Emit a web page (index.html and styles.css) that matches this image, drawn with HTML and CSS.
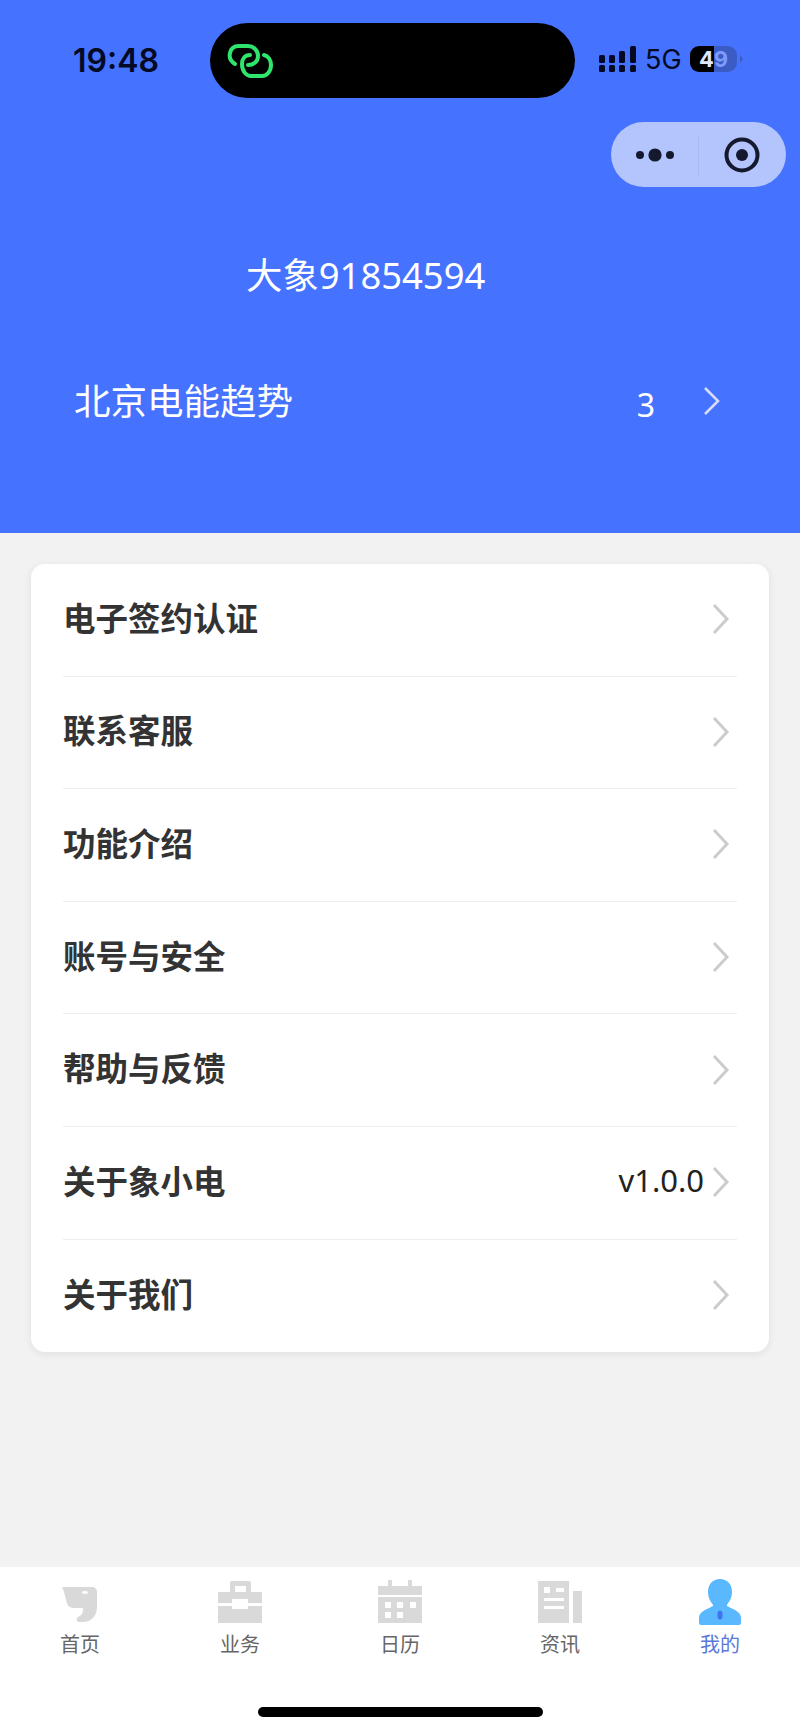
FILE: index.html
```html
<!DOCTYPE html>
<html lang="zh-CN">
<head>
    <meta charset="UTF-8">
    <meta name="viewport" content="width=device-width, initial-scale=1.0">
    <title>我的</title>
    <link rel="stylesheet" href="styles.css">
</head>
<body>
    <header class="header">
        <div class="status-bar">
            <span class="time">19:48</span>
            <div class="island">
                <svg class="link-icon" viewBox="0 0 46 36" fill="none" stroke="#2fe56b" stroke-width="4" stroke-linecap="round">
                    <path d="M8 21C3 18 2 14 3 10C4 5 8 3 12 3H21C27 3 31 8 31 13C31 19 26 22 21 22"/>
                    <path d="M23 12C18 12 15 16 15 21C15 28 19 33 24 33H35C40 33 44 28 44 22C44 17 41 13 37 12"/>
                </svg>
            </div>
            <svg class="signal" viewBox="0 0 37 26" fill="#050a24">
                <rect x="0" y="9" width="6" height="8" rx="1.5"/>
                <rect x="10" y="9" width="6" height="8" rx="1.5"/>
                <rect x="20" y="5" width="6" height="12" rx="1.5"/>
                <rect x="31" y="0" width="6" height="17" rx="1.5"/>
                <rect x="0" y="19" width="6" height="7" rx="1.5"/>
                <rect x="10" y="19" width="6" height="7" rx="1.5"/>
                <rect x="20" y="19" width="6" height="7" rx="1.5"/>
                <rect x="31" y="19" width="6" height="7" rx="1.5"/>
            </svg>
            <span class="network">5G</span>
            <div class="battery"><span class="battery-on">4</span><span class="battery-off">9</span></div>
            <span class="battery-tip"></span>
        </div>

        <div class="capsule">
            <div class="capsule-part">
                <svg width="42" height="16" viewBox="0 0 42 16" fill="#14192e">
                    <circle cx="6" cy="8" r="4"/>
                    <circle cx="21" cy="8" r="6.6"/>
                    <circle cx="36" cy="8" r="4"/>
                </svg>
            </div>
            <div class="capsule-part capsule-target">
                <svg width="36" height="36" viewBox="0 0 36 36">
                    <circle cx="18" cy="18" r="15.5" fill="none" stroke="#14192e" stroke-width="4"/>
                    <circle cx="18" cy="18" r="6" fill="#14192e"/>
                </svg>
            </div>
        </div>

        <div class="username">大象91854594</div>

        <div class="company">
            <span>北京电能趋势</span>
            <div class="company-right">
                <span class="company-count">3</span>
                <svg class="company-arrow" viewBox="0 0 18 30" fill="none" stroke="#d5dcf5" stroke-width="2.6">
                    <path d="M2 2L15 15L2 28"/>
                </svg>
            </div>
        </div>
    </header>

    <main class="main">
        <ul class="menu">
            <li class="menu-item">
                <span class="menu-title">电子签约认证</span>
                <svg class="arrow" viewBox="0 0 18 32" fill="none" stroke="#ccc" stroke-width="3"><path d="M2 2L15 16L2 30"/></svg>
            </li>
            <li class="menu-item">
                <span class="menu-title">联系客服</span>
                <svg class="arrow" viewBox="0 0 18 32" fill="none" stroke="#ccc" stroke-width="3"><path d="M2 2L15 16L2 30"/></svg>
            </li>
            <li class="menu-item">
                <span class="menu-title">功能介绍</span>
                <svg class="arrow" viewBox="0 0 18 32" fill="none" stroke="#ccc" stroke-width="3"><path d="M2 2L15 16L2 30"/></svg>
            </li>
            <li class="menu-item">
                <span class="menu-title">账号与安全</span>
                <svg class="arrow" viewBox="0 0 18 32" fill="none" stroke="#ccc" stroke-width="3"><path d="M2 2L15 16L2 30"/></svg>
            </li>
            <li class="menu-item">
                <span class="menu-title">帮助与反馈</span>
                <svg class="arrow" viewBox="0 0 18 32" fill="none" stroke="#ccc" stroke-width="3"><path d="M2 2L15 16L2 30"/></svg>
            </li>
            <li class="menu-item">
                <span class="menu-title">关于象小电</span>
                <span class="version">v1.0.0</span>
                <svg class="arrow" viewBox="0 0 18 32" fill="none" stroke="#ccc" stroke-width="3"><path d="M2 2L15 16L2 30"/></svg>
            </li>
            <li class="menu-item">
                <span class="menu-title">关于我们</span>
                <svg class="arrow" viewBox="0 0 18 32" fill="none" stroke="#ccc" stroke-width="3"><path d="M2 2L15 16L2 30"/></svg>
            </li>
        </ul>
    </main>

    <footer class="tabbar">
        <nav class="tabs">
            <div class="tab">
                <svg class="tab-icon" viewBox="6 6 48 48" fill="#d9d9d9">
                    <path d="M12 15H42C45 15 47 17 47 20V35C47 44 41 50 33 50H29C27 50 26 48 27 46C28 44 31 44 32 42C33 40 33 38 33 36H24C19 36 17 33 16 28C15 23 14 19 12 15Z"/>
                    <ellipse cx="35" cy="20.5" rx="3" ry="1.4" fill="#fff"/>
                </svg>
                <span class="tab-label">首页</span>
            </div>
            <div class="tab">
                <svg class="tab-icon" viewBox="6 6 48 48" fill="#d9d9d9">
                    <path fill-rule="evenodd" d="M22 9H39Q41 9 41 11V20H52V31H38V27H22V31H8V20H20V11Q20 9 22 9ZM25 14V20H36V14Z"/>
                    <path d="M8 34H22V37H38V34H52V51H8Z"/>
                </svg>
                <span class="tab-label">业务</span>
            </div>
            <div class="tab">
                <svg class="tab-icon" viewBox="6 6 48 48" fill="#d9d9d9">
                    <path d="M18 8H22V14H38V8H42V14H52V23H8V14H18Z"/>
                    <path fill-rule="evenodd" d="M8 25H52V51H8ZM15 30V36H21V30ZM27 30V36H33V30ZM40 30V36H46V30ZM15 40V46H21V40ZM27 40V46H33V40Z"/>
                </svg>
                <span class="tab-label">日历</span>
            </div>
            <div class="tab">
                <svg class="tab-icon" viewBox="6 6 48 48" fill="#d9d9d9">
                    <path fill-rule="evenodd" d="M8 9H39V51H8ZM14 15V21H20V15ZM26 16V20H34V16ZM14 26V29H34V26ZM14 34V37H34V34Z"/>
                    <rect x="43" y="19" width="9" height="32"/>
                </svg>
                <span class="tab-label">资讯</span>
            </div>
            <div class="tab tab-active">
                <svg class="tab-icon" viewBox="6 6 48 48">
                    <path fill="#5ab8ff" d="M30 7C37 7 42 12 42 20C42 26 39 30 37 33V34C42 37 51 39 51 46V51Q51 53 49 53H11Q9 53 9 51V46C9 39 18 37 23 34V33C21 30 18 26 18 20C18 12 23 7 30 7Z"/>
                    <ellipse cx="30" cy="43" rx="2.6" ry="4.6" fill="#3f73f0"/>
                </svg>
                <span class="tab-label">我的</span>
            </div>
        </nav>
        <div class="home-bar"></div>
    </footer>
</body>
</html>
```

FILE: styles.css
```css
/* page */
* {
    box-sizing: border-box;
}

body {
    margin: 0;
    height: 1734px;
    display: flex;
    flex-direction: column;
    background-color: #f2f2f2;
    font-family: "Noto Sans", "Noto Sans CJK SC", sans-serif;
    color: #333;
}

/* blue header */
.header {
    height: 533px;
    padding-top: 23px;
    display: flex;
    flex-direction: column;
    background-color: #4572ff;
    color: #fff;
}

.status-bar {
    height: 75px;
    padding-left: 73px;
    display: flex;
    align-items: center;
    color: #050a24;
}

.time {
    width: 137px;
    font-family: Inter, sans-serif;
    font-size: 32px;
    font-weight: 600;
}

.island {
    width: 365px;
    height: 75px;
    padding-left: 17px;
    display: flex;
    align-items: center;
    margin-right: 24px;
    border-radius: 38px;
    background-color: #000;
}

.link-icon {
    width: 46px;
    height: 36px;
}

.signal {
    width: 37px;
    height: 26px;
    margin-right: 9px;
    margin-bottom: 3px;
}

.network {
    width: 45px;
    margin-bottom: 2px;
    font-family: Inter, sans-serif;
    font-size: 27px;
}

.battery {
    width: 47px;
    height: 26px;
    margin-bottom: 3px;
    display: flex;
    align-items: center;
    justify-content: center;
    border-radius: 9px;
    background: linear-gradient(to right, #000 24px, #3a5cc4 24px);
    font-family: Inter, sans-serif;
    font-size: 22px;
    font-weight: 700;
}

.battery-on {
    color: #dfe6ff;
}

.battery-off {
    color: #7d9bff;
}

.battery-tip {
    margin-left: 3px;
    margin-bottom: 3px;
    border-left: 3px solid #3a5cc4;
    border-top: 4px solid transparent;
    border-bottom: 4px solid transparent;
}

.capsule {
    align-self: flex-end;
    width: 175px;
    height: 65px;
    margin-top: 24px;
    margin-right: 14px;
    display: flex;
    align-items: center;
    border-radius: 33px;
    background-color: #b3c5fc;
}

.capsule-part {
    width: 87px;
    height: 40px;
    display: flex;
    align-items: center;
    justify-content: center;
}

.capsule-target {
    width: 86px;
    border-left: 1px solid #a6b9f2;
}

.username {
    margin-top: 63px;
    margin-left: 246px;
    font-size: 36.4px;
    line-height: 50px;
}

.company {
    margin-top: 76px;
    padding: 0 79px 0 74px;
    display: flex;
    align-items: center;
    justify-content: space-between;
    font-size: 36.5px;
    line-height: 50px;
}

.company-right {
    display: flex;
    align-items: center;
    gap: 48px;
}

.company-count {
    position: relative;
    top: 4px;
    font-size: 32px;
}

.company-arrow {
    width: 18px;
    height: 30px;
}

/* menu card */
.main {
    flex: 1;
    padding: 31px 31px 0;
}

.menu {
    margin: 0;
    padding: 0;
    list-style: none;
    border-radius: 14px;
    background-color: #fff;
    box-shadow: 0 2px 8px rgba(0, 0, 0, 0.08);
}

.menu-item {
    height: 112.6px;
    margin: 0 32px;
    padding-right: 7px;
    padding-bottom: 1px;
    display: flex;
    align-items: center;
    border-bottom: 1px solid #eee;
    font-size: 32.5px;
    color: #333;
}

.menu-item:last-child {
    border-bottom: none;
}

.menu-title {
    margin-right: auto;
    padding-bottom: 5px;
    font-weight: 600;
}

.version {
    margin-right: 8px;
    padding-bottom: 4px;
    font-size: 31px;
    color: #222;
}

.arrow {
    width: 18px;
    height: 32px;
}

/* bottom tabs */
.tabbar {
    height: 167px;
    padding-top: 11px;
    background-color: #fff;
}

.tabs {
    display: grid;
    grid-template-columns: repeat(5, 1fr);
}

.tab {
    display: flex;
    flex-direction: column;
    align-items: center;
    gap: 5px;
}

.tab-icon {
    width: 48px;
    height: 48px;
}

.tab-label {
    font-size: 20px;
    line-height: 28px;
    color: #666;
}

.tab-active .tab-label {
    color: #5a78d8;
}

.home-bar {
    width: 285px;
    height: 10px;
    margin: 48px auto 0;
    border-radius: 5px;
    background-color: #000;
}
```
